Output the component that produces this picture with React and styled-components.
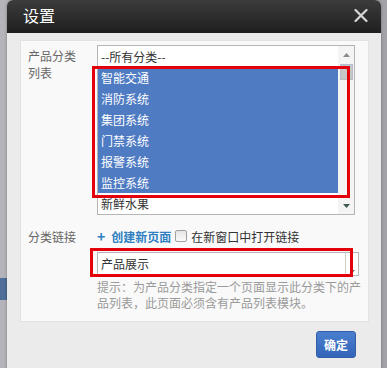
import React from "react";
import styled, { createGlobalStyle } from "styled-components";

const Global = createGlobalStyle`
  html, body { margin: 0; padding: 0; }
  body {
    width: 387px; height: 368px; overflow: hidden;
    background: #9c9ca0;
    font-family: "Noto Sans CJK SC", "Microsoft YaHei", sans-serif;
  }
`;

const Page = styled.div`
  height: 368px;
  padding-left: 7px;
  box-sizing: border-box;
  background:
    linear-gradient(to bottom, transparent 278px, #4f6e98 278px, #4f6e98 300px, transparent 300px) left top / 7px 100% no-repeat,
    linear-gradient(to right, #b4b4ba, #a2a2a8);
`;

const Dialog = styled.div`
  width: 374px;
  height: 380px;
  background: #ebebeb;
  border-radius: 6px;
  overflow: hidden;
  box-shadow: 0 0 3px rgba(0,0,0,0.35);
`;

const TitleBar = styled.div`
  height: 33px;
  background: linear-gradient(#3c3c3c, #1f1f1f);
  display: flex;
  align-items: center;
  justify-content: space-between;
  padding: 0 13px 0 16px;
`;

const Title = styled.span`
  color: #fff;
  font-size: 16px;
  line-height: 20px;
  margin-top: -3px;
`;

const CloseIcon = () => (
  <svg width="14" height="13" viewBox="0 0 14 13" style={{ marginTop: -2 }}>
    <path d="M1.5 1 L12.5 12 M12.5 1 L1.5 12" stroke="#d6d6d6" strokeWidth="2.2" strokeLinecap="round" />
  </svg>
);

const Body = styled.div`
  padding: 7px 12px 0 13px;
`;

const Panel = styled.div`
  height: 282px;
  box-sizing: border-box;
  background: #f9f9f9;
  border: 1px solid #e2e2e2;
  padding: 4px 0 0 7px;
`;

const FormRow = styled.div`
  display: grid;
  grid-template-columns: 69px 1fr;
  margin-top: ${p => p.$mt || 0}px;
  align-items: ${p => p.$center ? "center" : "start"};
`;

const Label = styled.div`
  width: 52px;
  font-size: 12px;
  line-height: 17px;
  color: #666;
  padding-top: ${p => p.$pt || 0}px;
`;

const ListWrap = styled.div`
  position: relative;
  width: 258px;
`;

const ListBox = styled.div`
  width: 258px;
  height: 170px;
  box-sizing: border-box;
  border: 1px solid #b5b5b5;
  background: #fff;
  display: flex;
`;

const Options = styled.div`
  flex: 1;
  overflow: hidden;
`;

const Option = styled.div`
  height: 21px;
  line-height: 21px;
  font-size: 12px;
  padding-left: 3px;
  color: ${p => p.$sel ? "#fff" : "#333"};
  background: ${p => p.$sel ? "#4f7bc3" : "transparent"};
`;

const ScrollBar = styled.div`
  width: 16px;
  background: #f4f4f4;
  display: flex;
  flex-direction: column;
  align-items: center;
`;

const ArrowBtn = styled.div`
  height: 17px;
  width: 16px;
  display: flex;
  align-items: center;
  justify-content: center;
`;

const Thumb = styled.div`
  width: 13px;
  height: 16px;
  margin-top: 1px;
  box-sizing: border-box;
  border: 1px solid #b8bcc4;
  background: linear-gradient(#b9c8de, #c9c9c9 30%, #c4c4c4);
`;

const Track = styled.div`
  flex: 1;
`;

const RedBox = styled.div`
  position: absolute;
  left: ${p => p.$l}px;
  top: ${p => p.$t}px;
  width: ${p => p.$w}px;
  height: ${p => p.$h}px;
  box-sizing: border-box;
  border: 3px solid #e3000b;
  pointer-events: none;
`;

const LinkLine = styled.div`
  display: flex;
  align-items: center;
  height: 20px;
  font-size: 12px;
`;

const Plus = styled.span`
  color: #2e7fc1;
  font-weight: bold;
  font-size: 14px;
  margin: 0 6px 0 0;
  line-height: 20px;
`;

const CreateLink = styled.a`
  color: #2e7fc1;
  font-weight: bold;
  text-decoration: none;
`;

const CheckBox = styled.span`
  width: 12px;
  height: 12px;
  box-sizing: border-box;
  border: 1px solid #a0a0a0;
  border-radius: 2px;
  background: linear-gradient(#e6e6e6, #fafafa);
  margin: 0 4px 0 4px;
`;

const CheckText = styled.span`
  color: #333;
`;

const InputWrap = styled.div`
  position: relative;
  width: 262px;
`;

const Input = styled.div`
  height: 24px;
  box-sizing: border-box;
  border: 1px solid #b5b5b5;
  background: #fff;
  display: flex;
`;

const InputText = styled.div`
  flex: 1;
  font-size: 12px;
  line-height: 22px;
  padding-left: 3px;
  color: #333;
`;

const DropBtn = styled.div`
  width: 12px;
  border-left: 1px solid #d0d0d0;
  display: flex;
  align-items: flex-end;
  justify-content: center;
  padding-bottom: 2px;
`;

const Hint = styled.div`
  width: 266px;
  margin-top: 3px;
  font-size: 12px;
  line-height: 16px;
  color: #9a9a9a;
`;

const Footer = styled.div`
  display: flex;
  justify-content: flex-end;
  padding: 9px 13px 0 0;
`;

const OkButton = styled.button`
  width: 40px;
  height: 27px;
  border: 1px solid #345fa8;
  border-radius: 3px;
  background: linear-gradient(#4a7fcf, #3465b8);
  color: #fff;
  font-family: inherit;
  font-size: 12px;
  font-weight: bold;
  padding: 0;
`;

const options = [
  { t: "--所有分类--" },
  { t: "智能交通", sel: true },
  { t: "消防系统", sel: true },
  { t: "集团系统", sel: true },
  { t: "门禁系统", sel: true },
  { t: "报警系统", sel: true },
  { t: "监控系统", sel: true },
  { t: "新鲜水果" },
];

export default function App() {
  return (
    <>
      <Global />
      <Page>
        <Dialog>
          <TitleBar>
            <Title>设置</Title>
            <CloseIcon />
          </TitleBar>
          <Body>
            <Panel>
              <FormRow>
                <Label $pt={2}>产品分类列表</Label>
                <ListWrap>
                  <ListBox>
                    <Options>
                      {options.map((o, i) => (
                        <Option key={i} $sel={o.sel}>{o.t}</Option>
                      ))}
                    </Options>
                    <ScrollBar>
                      <ArrowBtn>
                        <svg width="7" height="4" viewBox="0 0 7 4"><path d="M0 4 L3.5 0 L7 4Z" fill="#8a8a8a" /></svg>
                      </ArrowBtn>
                      <Thumb />
                      <Track />
                      <ArrowBtn>
                        <svg width="7" height="4" viewBox="0 0 7 4"><path d="M0 0 L3.5 4 L7 0Z" fill="#3e5a4c" /></svg>
                      </ArrowBtn>
                    </ScrollBar>
                  </ListBox>
                  <RedBox $l={-5} $t={21} $w={258} $h={132} />
                </ListWrap>
              </FormRow>
              <FormRow $mt={11} $center>
                <Label>分类链接</Label>
                <LinkLine>
                  <Plus>+</Plus>
                  <CreateLink>创建新页面</CreateLink>
                  <CheckBox />
                  <CheckText>在新窗口中打开链接</CheckText>
                </LinkLine>
              </FormRow>
              <FormRow $mt={6}>
                <span />
                <div>
                  <InputWrap>
                    <Input>
                      <InputText>产品展示</InputText>
                      <DropBtn>
                        <svg width="5" height="3" viewBox="0 0 5 3"><path d="M0 0 L2.5 3 L5 0Z" fill="#777" /></svg>
                      </DropBtn>
                    </Input>
                    <RedBox $l={-7} $t={-4} $w={263} $h={29} />
                  </InputWrap>
                  <Hint>提示：为产品分类指定一个页面显示此分类下的产品列表，此页面必须含有产品列表模块。</Hint>
                </div>
              </FormRow>
            </Panel>
            <Footer>
              <OkButton>确定</OkButton>
            </Footer>
          </Body>
        </Dialog>
      </Page>
    </>
  );
}
